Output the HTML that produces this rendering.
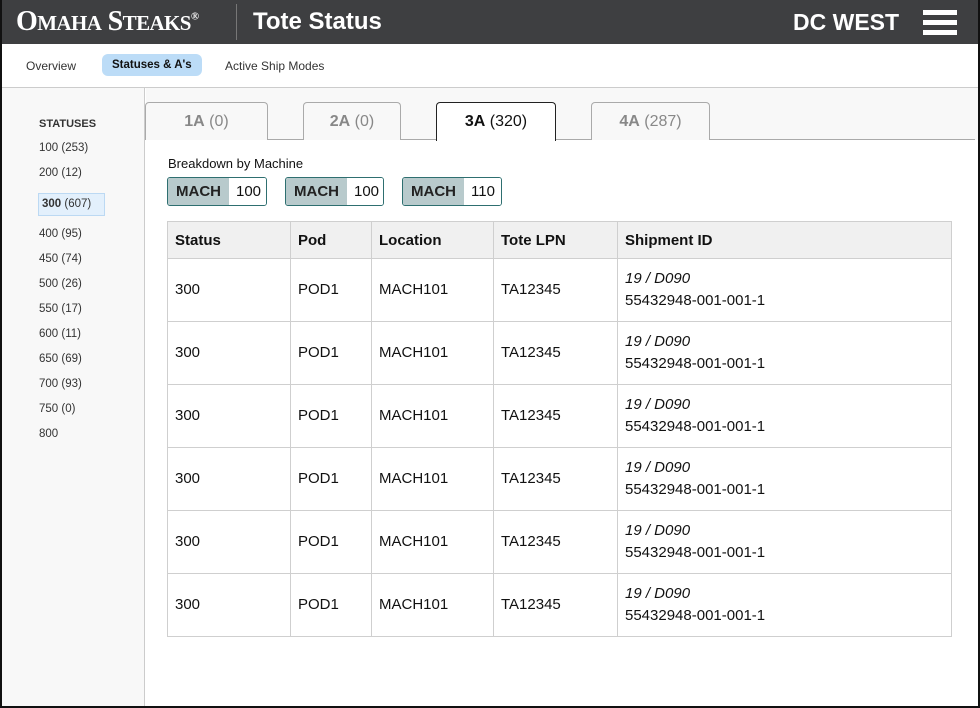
<!DOCTYPE html>
<html><head><meta charset="utf-8"><style>
*{box-sizing:border-box;margin:0;padding:0}
body{width:980px;height:708px;overflow:hidden;font-family:"Liberation Sans",sans-serif;background:#fff;position:relative;color:#111}
.frame{position:absolute;inset:0;border:2px solid #111;border-top:0;pointer-events:none;z-index:9}
.hdr{position:absolute;left:0;top:0;width:980px;height:44px;background:#3e3f41;color:#fff}
.logo{position:absolute;left:16px;top:6px;font-family:"Liberation Serif",serif;font-weight:bold;font-size:28px;letter-spacing:-0.6px}
.logo small{font-size:21px}
.sep{position:absolute;left:236px;top:4px;width:1px;height:36px;background:#777}
.title{position:absolute;left:253px;top:8px;font-size:24px;font-weight:bold}
.dc{position:absolute;left:793px;top:9px;font-size:23px;font-weight:bold}
.ham{position:absolute;left:923px;top:10px;width:34px}
.ham i{display:block;height:5px;background:#fff;margin-bottom:5px}
.nav{position:absolute;top:44px;left:0;width:980px;height:44px;border-bottom:1px solid #ccc;font-size:12px;color:#333}
.nav span{position:absolute;top:15px}
.nav .act{left:102px;top:10px;background:#bcdcf7;border-radius:6px;padding:5px 10px;font-weight:bold;color:#111;font-size:11.5px}
.side{position:absolute;left:0;top:88px;width:145px;height:620px;background:#f8f8f8;border-right:1px solid #ccc;font-size:11.5px;color:#333}
.side div{position:absolute;left:39px}
.main{position:absolute;left:146px;top:88px;width:834px;height:52px;background:#f8f8f8}
.tabline{position:absolute;left:145px;top:139px;width:830px;height:1px;background:#aaa}
.tab{position:absolute;top:102px;height:38px;border:1px solid #aaa;border-bottom:0;border-radius:4px 4px 0 0;background:#f8f8f8;text-align:center;font-size:16px;line-height:38px;color:#888}
.tab b{color:#888}
.tab.a{background:#fff;border-color:#222;color:#111;height:39px;z-index:2}
.tab.a b{color:#111}
.bd{position:absolute;left:168px;top:156px;font-size:13px}
.chip{position:absolute;top:177px;height:29px;border:1px solid #2e6f70;border-radius:3px;display:flex;font-size:15px;overflow:hidden}
.chip b{background:#b8cacc;padding:0 8px;line-height:27px;font-weight:bold;color:#222}
.chip span{background:#fff;padding:0 7px;line-height:27px}
table{position:absolute;left:167px;top:221px;width:785px;border-collapse:collapse;font-size:15px;border:1px solid #d6d6d6}
td,th{border:1px solid #cfcfcf;text-align:left;padding:0 7px;vertical-align:middle}
th{height:37px;background:#f0f0f0;font-weight:bold}
td{height:63px;line-height:22px}
td i{display:block}
</style></head><body>
<div class="hdr">
<div class="logo">O<small>MAHA</small> S<small>TEAKS</small><sup style="font-size:11px">®</sup></div>
<div class="sep"></div>
<div class="title">Tote Status</div>
<div class="dc">DC WEST</div>
<div class="ham"><i></i><i></i><i></i></div>
</div>
<div class="nav"><span style="left:26px">Overview</span><span class="act">Statuses &amp; A's</span><span style="left:225px">Active Ship Modes</span></div>
<div class="side">
<div style="top:30px;font-weight:bold;font-size:11px">STATUSES</div>
<div style="top:54px">100 (253)</div>
<div style="top:79px">200 (12)</div>
<div style="top:105px;left:38px;width:67px;height:23px;background:#e3f0fc;border:1px solid #bcd9f3;padding:4px 3px"><b>300</b> (607)</div>
<div style="top:140px">400 (95)</div>
<div style="top:165px">450 (74)</div>
<div style="top:190px">500 (26)</div>
<div style="top:215px">550 (17)</div>
<div style="top:240px">600 (11)</div>
<div style="top:265px">650 (69)</div>
<div style="top:290px">700 (93)</div>
<div style="top:315px">750 (0)</div>
<div style="top:340px">800</div>
</div>
<div class="main"></div>
<div class="tabline"></div>
<div class="tab" style="left:145px;width:123px"><b>1A</b> (0)</div>
<div class="tab" style="left:303px;width:98px"><b>2A</b> (0)</div>
<div class="tab a" style="left:436px;width:120px"><b>3A</b> (320)</div>
<div class="tab" style="left:591px;width:119px"><b>4A</b> (287)</div>
<div class="bd">Breakdown by Machine</div>
<div class="chip" style="left:167px;width:100px"><b>MACH</b><span>100</span></div>
<div class="chip" style="left:285px;width:99px"><b>MACH</b><span>100</span></div>
<div class="chip" style="left:402px;width:100px"><b>MACH</b><span>110</span></div>
<table>
<tr><th style="width:123px">Status</th><th style="width:81px">Pod</th><th style="width:122px">Location</th><th style="width:124px">Tote LPN</th><th>Shipment ID</th></tr>
<tr><td>300</td><td>POD1</td><td>MACH101</td><td>TA12345</td><td><i>19 / D090</i>55432948-001-001-1</td></tr>
<tr><td>300</td><td>POD1</td><td>MACH101</td><td>TA12345</td><td><i>19 / D090</i>55432948-001-001-1</td></tr>
<tr><td>300</td><td>POD1</td><td>MACH101</td><td>TA12345</td><td><i>19 / D090</i>55432948-001-001-1</td></tr>
<tr><td>300</td><td>POD1</td><td>MACH101</td><td>TA12345</td><td><i>19 / D090</i>55432948-001-001-1</td></tr>
<tr><td>300</td><td>POD1</td><td>MACH101</td><td>TA12345</td><td><i>19 / D090</i>55432948-001-001-1</td></tr>
<tr><td>300</td><td>POD1</td><td>MACH101</td><td>TA12345</td><td><i>19 / D090</i>55432948-001-001-1</td></tr>
</table>
<div class="frame"></div>
</body></html>
